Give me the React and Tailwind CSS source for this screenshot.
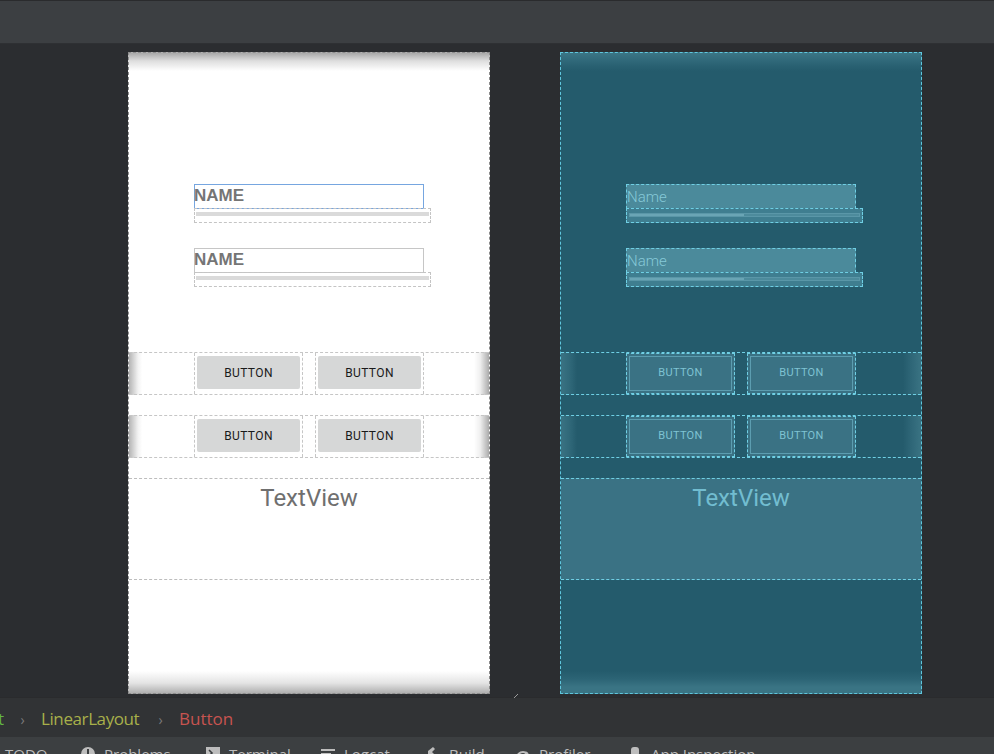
import React from "react";

function EditLight({ selected }) {
  return (
    <div className="flex flex-col">
      <div
        className={`h-[25px] w-[230px] border ${selected ? "border-[#76a6e0]" : "border-[#c6c6c6]"} flex items-start`}
      >
        <span className="text-[17px] leading-[22px] font-bold text-[#757575] [font-family:'Liberation_Sans',Arial,sans-serif] -ml-[1px]">
          NAME
        </span>
      </div>
      <div className="-mt-[1px] h-[15px] w-[237px] border border-dashed border-[#c4c4c4] pt-[3px] px-[1px]">
        <div className="h-[4px] bg-[#dadada]" />
      </div>
    </div>
  );
}

function EditDark() {
  return (
    <div className="flex flex-col">
      <div className="h-[25px] w-[230px] border border-dashed border-[#6fcfe4] bg-[#4b8a9b] flex items-start">
        <span className="text-[15px] leading-[24px] font-light text-[#86c9d8] [font-family:Roboto,sans-serif]">
          Name
        </span>
      </div>
      <div className="-mt-[1px] h-[15px] w-[237px] border border-dashed border-[#6fcfe4] bg-[#3f7e90] pt-[4px] px-[2px]">
        <div className="h-[4px] border border-[#5a97a8] bg-[linear-gradient(to_right,#6aa5b5_0%,#6aa5b5_50%,#4d8b9c_50%)]" />
      </div>
    </div>
  );
}

function RowLight() {
  return (
    <div className="h-[43px] border-y border-dashed border-[#c6c6c6] flex pl-[65px] gap-[12px] bg-[linear-gradient(to_right,#b4b4b4_0px,#f2f2f2_9px,#fff_13px,#fff_calc(100%-15px),#f0f0f0_calc(100%-9px),#acacac_100%)]">
      {[0, 1].map((i) => (
        <div
          key={i}
          className="w-[109px] border-x border-dashed border-[#c6c6c6] pt-[3px] pb-[5px] px-[2px] flex"
        >
          <div className="flex-1 rounded-[2px] bg-[#d6d7d7] flex items-center justify-center text-[12px] text-[#1a1a1a] [font-family:Roboto,sans-serif] font-normal tracking-[0.4px]">
            BUTTON
          </div>
        </div>
      ))}
    </div>
  );
}

function RowDark() {
  return (
    <div className="h-[43px] border-y border-dashed border-[#6fcfe4] flex pl-[65px] gap-[12px] bg-[linear-gradient(to_right,#3a7383_0px,#2e6677_10px,#245b6c_16px,#245b6c_calc(100%-18px),#2e6677_calc(100%-10px),#3a7383_100%)]">
      {[0, 1].map((i) => (
        <div
          key={i}
          className="w-[109px] border border-dashed border-[#6fcfe4] bg-[#3a7284] p-[2px] flex"
        >
          <div className="flex-1 border border-[#5c9db0] flex items-center justify-center text-[11px] text-[#7fc3d3] [font-family:Roboto,sans-serif] tracking-[0.3px]">
            BUTTON
          </div>
        </div>
      ))}
    </div>
  );
}

function Phone({ dark }) {
  return (
    <div
      className={`w-[362px] h-[642px] border border-dashed flex flex-col ${
        dark
          ? "border-[#5fc7de] bg-[linear-gradient(to_bottom,#3b7585_0px,#2a6273_12px,#245b6c_18px,#245b6c_calc(100%-22px),#2c6475_calc(100%-14px),#3a7484_calc(100%-6px),#3a7484_100%)]"
          : "border-[#8c8c8c] bg-[linear-gradient(to_bottom,#a8a8a8_0px,#dedede_8px,#fff_18px,#fff_calc(100%-22px),#e4e4e4_calc(100%-10px),#b0b0b0_100%)]"
      }`}
    >
      <div className="pt-[131px] pl-[65px] flex flex-col">
        {dark ? <EditDark /> : <EditLight selected />}
        <div className="mt-[25px]">{dark ? <EditDark /> : <EditLight />}</div>
      </div>
      <div className="mt-[65px]">{dark ? <RowDark /> : <RowLight />}</div>
      <div className="mt-[20px]">{dark ? <RowDark /> : <RowLight />}</div>
      <div
        className={`mt-[20px] h-[102px] border-y border-dashed flex justify-center ${
          dark ? "border-[#6fcfe4] bg-[#3a7284]" : "border-[#bdbdbd] bg-white"
        }`}
      >
        <span
          className={`pt-[3px] text-[24px] leading-[32px] [font-family:Roboto,sans-serif] ${
            dark ? "text-[#72bdd0]" : "text-[#6f6f6f]"
          }`}
        >
          TextView
        </span>
      </div>
    </div>
  );
}

function ToolIcon({ kind }) {
  const c = "#bdbdbd";
  if (kind === "problems")
    return (
      <svg width="16" height="16" viewBox="0 0 16 16">
        <circle cx="8" cy="8" r="7" fill={c} />
        <rect x="7" y="3" width="2" height="6" fill="#3c3f41" />
      </svg>
    );
  if (kind === "terminal")
    return (
      <svg width="16" height="16" viewBox="0 0 16 16">
        <rect x="1" y="1" width="14" height="14" fill={c} />
        <path d="M4 4 L7 7 L4 10" stroke="#3c3f41" strokeWidth="1.6" fill="none" />
      </svg>
    );
  if (kind === "logcat")
    return (
      <svg width="16" height="16" viewBox="0 0 16 16">
        <rect x="1" y="3" width="14" height="2" fill={c} />
        <rect x="1" y="7" width="10" height="2" fill={c} />
        <rect x="1" y="11" width="12" height="2" fill={c} />
      </svg>
    );
  if (kind === "build")
    return (
      <svg width="16" height="16" viewBox="0 0 16 16">
        <path d="M3 5 L8 1 L10 3 L7 6 L14 13 L12 15 L5 8 L3 10 Z" fill={c} />
      </svg>
    );
  if (kind === "profiler")
    return (
      <svg width="16" height="16" viewBox="0 0 16 16">
        <path d="M2 12 A6 6 0 1 1 14 12" stroke={c} strokeWidth="2" fill="none" />
        <path d="M8 12 L12 6" stroke={c} strokeWidth="2" />
      </svg>
    );
  if (kind === "inspect")
    return (
      <svg width="16" height="16" viewBox="0 0 16 16">
        <rect x="4" y="1" width="8" height="9" rx="3" fill={c} />
        <rect x="1" y="9" width="14" height="3" fill={c} />
      </svg>
    );
  return null;
}

export default function App() {
  const tools = [
    { k: null, t: "TODO", w: "w-[75px]" },
    { k: "problems", t: "Problems", w: "w-[125px]" },
    { k: "terminal", t: "Terminal", w: "w-[115px]" },
    { k: "logcat", t: "Logcat", w: "w-[105px]" },
    { k: "build", t: "Build", w: "w-[90px]" },
    { k: "profiler", t: "Profiler", w: "w-[112px]" },
    { k: "inspect", t: "App Inspection", w: "w-[150px]" },
  ];
  return (
    <div className="w-[994px] h-[754px] overflow-hidden flex flex-col bg-[#2b2d30] [font-family:'Noto_Sans',sans-serif]">
      {/* top toolbar */}
      <div className="h-[44px] shrink-0 bg-[#3c3f42] border-t border-[#2a2b2d] border-b border-b-[#2e3033]" />
      {/* canvas */}
      <div className="h-[653px] shrink-0 flex pt-[8px] pl-[128px] gap-[70px] bg-[#2b2d30] relative">
        <Phone />
        <Phone dark />
        <svg
          className="absolute left-[513px] top-[649px]"
          width="6"
          height="6"
          viewBox="0 0 6 6"
        >
          <path d="M1 5 L5 1" stroke="#9a9a9a" strokeWidth="1" />
        </svg>
      </div>
      {/* breadcrumb */}
      <div className="h-[40px] shrink-0 bg-[#313335] border-t border-[#2a2b2d] flex items-center text-[17px] [font-family:'Open_Sans',sans-serif] pt-[3px]">
        <span className="inline-block w-[4px] overflow-hidden">
          <span className="inline-block -ml-[2px] text-[#62b543]">t</span>
        </span>
        <span className="inline-block w-[37px] text-center text-[#7a7a7a] text-[14px]">›</span>
        <span className="inline-block w-[101px] text-[#a8b04a] tracking-[-0.4px] whitespace-nowrap">
          LinearLayout
        </span>
        <span className="inline-block w-[37px] text-center text-[#7a7a7a] text-[14px]">›</span>
        <span className="text-[#c75450]">Button</span>
      </div>
      {/* bottom tool bar */}
      <div className="flex-1 bg-[#3c3f41] overflow-hidden flex items-start pt-[7px] pl-[5px] text-[15px] text-[#bbbbbb] [font-family:'Open_Sans',sans-serif] leading-[20px]">
        {tools.map((it) => (
          <div key={it.t} className={`${it.w} shrink-0 flex items-start gap-[8px]`}>
            {it.k && (
              <span className="mt-[2px]">
                <ToolIcon kind={it.k} />
              </span>
            )}
            <span>{it.t}</span>
          </div>
        ))}
      </div>
    </div>
  );
}
